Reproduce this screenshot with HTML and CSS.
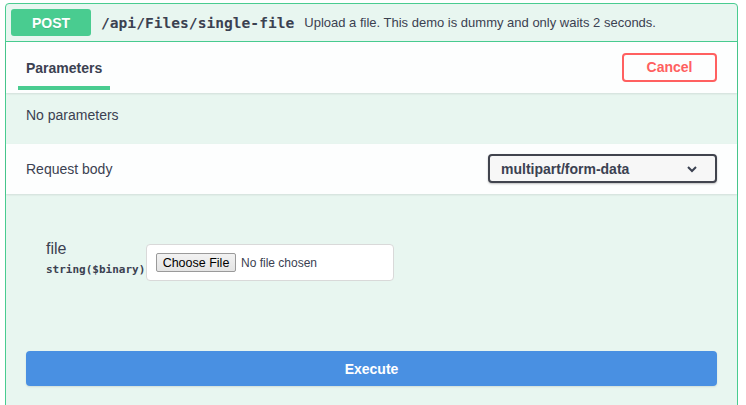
FILE: index.html
```html
<!DOCTYPE html>
<html lang="en">
<head>
<meta charset="utf-8">
<title>POST /api/Files/single-file</title>
<link rel="stylesheet" href="styles.css">
</head>
<body>
<div class="opblock">
  <div class="summary">
    <span class="method">POST</span>
    <span class="path">/api/Files/single-file</span>
    <span class="desc">Upload a file. This demo is dummy and only waits 2 seconds.</span>
  </div>
  <div class="tabs">
    <div class="tab">Parameters</div>
    <button class="cancel" type="button">Cancel</button>
  </div>
  <div class="no-params">No parameters</div>
  <div class="rb-header">
    <span>Request body</span>
    <div class="select">
      <span>multipart/form-data</span>
      <svg class="chev" width="12" height="8" viewBox="0 0 12 8"><polyline points="2,2 6,6 10,2" fill="none" stroke="#3b4151" stroke-width="2"/></svg>
    </div>
  </div>
  <div class="rb-body">
    <div class="param">
      <div class="pname">
        <div class="name">file</div>
        <div class="type">string($binary)</div>
      </div>
      <div class="filebox">
        <span class="choose">Choose File</span>
        <span class="nofile">No file chosen</span>
      </div>
    </div>
    <button class="execute" type="button">Execute</button>
  </div>
</div>
</body>
</html>
```

FILE: styles.css
```css
* { box-sizing: border-box; }
html, body { margin: 0; background: #fff; }
body {
  font-family: "Liberation Sans", Arial, sans-serif;
  color: #3b4151;
  padding: 3px 8px 0 5px;
  height: 405px;
  overflow: hidden;
}
.opblock {
  border: 1px solid #49cc90;
  border-radius: 4px;
  background: #e8f6f0;
  height: 420px;
}
.summary {
  display: flex;
  align-items: center;
  padding: 5px;
  height: 38px;
  border-bottom: 1px solid #49cc90;
}
.method {
  width: 80px;
  height: 27px;
  background: #49cc90;
  border-radius: 3px;
  color: #fff;
  font-weight: bold;
  font-size: 14px;
  display: flex;
  align-items: center;
  justify-content: center;
  text-shadow: 0 1px 0 rgba(0,0,0,.1);
}
.path {
  font-family: "DejaVu Sans Mono", "Liberation Mono", monospace;
  font-weight: bold;
  font-size: 14.6px;
  margin-left: 10px;
  color: #3b4151;
}
.desc {
  font-size: 13px;
  margin-left: 10px;
}
.tabs {
  background: #fdfefe;
  height: 51px;
  display: flex;
  align-items: center;
  justify-content: space-between;
  padding: 0 20px 0 20px;
  box-shadow: 0 1px 2px rgba(0,0,0,.1);
  position: relative;
}
.tab {
  font-size: 14px;
  font-weight: bold;
  position: relative;
}
.tab::after {
  content: "";
  position: absolute;
  left: -8px;
  right: -8px;
  top: 26px;
  height: 4px;
  background: #49cc90;
}
.cancel {
  width: 95px;
  height: 29px;
  margin-top: -1px;
  border: 2px solid #ff6060;
  border-radius: 4px;
  background: transparent;
  color: #ff6060;
  font-family: "Liberation Sans", Arial, sans-serif;
  font-weight: bold;
  font-size: 14px;
  padding: 0;
}
.no-params {
  height: 51px;
  padding: 14px 20px 0 20px;
  font-size: 14px;
  line-height: 17px;
}
.rb-header {
  background: #fdfefe;
  height: 50px;
  padding: 0 20px;
  display: flex;
  align-items: center;
  justify-content: space-between;
  font-size: 14px;
  box-shadow: 0 1px 2px rgba(0,0,0,.1);
}
.select {
  width: 229px;
  height: 29px;
  margin-top: -1px;
  border: 2px solid #41444e;
  border-radius: 4px;
  background: #f7f7f7;
  box-shadow: 0 1px 2px rgba(0,0,0,.25);
  display: flex;
  align-items: center;
  justify-content: space-between;
  padding: 0 17px 0 11px;
  font-weight: bold;
  font-size: 14px;
}
.chev { display: block; }
.rb-body {
  padding: 46px 20px 0 20px;
}
.param {
  display: flex;
  align-items: flex-start;
  padding-left: 20px;
}
.pname { width: 100px; }
.name {
  font-size: 16px;
  line-height: 18px;
}
.type {
  font-family: "DejaVu Sans Mono", "Liberation Mono", monospace;
  font-weight: bold;
  font-size: 11px;
  margin-top: 5px;
  color: #3b4151;
}
.filebox {
  margin-top: 4px;
  width: 248px;
  height: 37px;
  background: #fff;
  border: 1px solid #d9d9d9;
  border-radius: 4px;
  display: flex;
  align-items: center;
  padding-left: 9px;
  font-size: 12px;
  color: #3b4151;
}
.choose {
  display: inline-flex;
  align-items: center;
  justify-content: center;
  width: 80px;
  height: 19px;
  background: linear-gradient(#f2f2f2, #e4e4e4);
  border: 1px solid #9a9a9a;
  border-radius: 2px;
  font-size: 12.5px;
  color: #000;
}
.nofile { margin-left: 5px; }
.execute {
  display: block;
  width: 100%;
  height: 35px;
  margin-top: 70px;
  background: #4990e2;
  border: none;
  border-radius: 4px;
  color: #fff;
  font-family: "Liberation Sans", Arial, sans-serif;
  font-weight: bold;
  font-size: 14px;
  box-shadow: 0 1px 2px rgba(0,0,0,.1);
}
```
